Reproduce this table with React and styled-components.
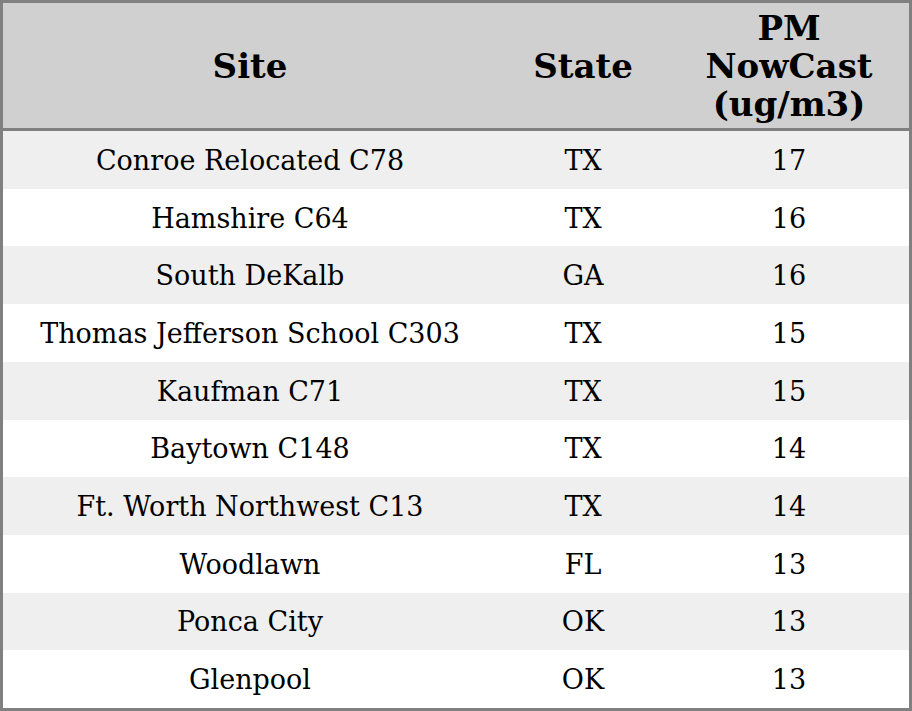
import React from "react";
import styled, { createGlobalStyle } from "styled-components";

const GlobalStyle = createGlobalStyle`
  html, body {
    margin: 0;
    padding: 0;
    background: #ffffff;
  }
  body {
    font-family: "DejaVu Serif", serif;
    color: #000000;
  }
`;

const rows = [
  { site: "Conroe Relocated C78", state: "TX", pm: 17 },
  { site: "Hamshire C64", state: "TX", pm: 16 },
  { site: "South DeKalb", state: "GA", pm: 16 },
  { site: "Thomas Jefferson School C303", state: "TX", pm: 15 },
  { site: "Kaufman C71", state: "TX", pm: 15 },
  { site: "Baytown C148", state: "TX", pm: 14 },
  { site: "Ft. Worth Northwest C13", state: "TX", pm: 14 },
  { site: "Woodlawn", state: "FL", pm: 13 },
  { site: "Ponca City", state: "OK", pm: 13 },
  { site: "Glenpool", state: "OK", pm: 13 },
];

const Table = styled.div`
  box-sizing: border-box;
  width: 912px;
  height: 711px;
  border: 3px solid #808080;
  display: grid;
  grid-template-columns: 494px 172px 1fr;
  grid-template-rows: 128px repeat(10, 1fr);
`;

const HeadCell = styled.div`
  background: #d0d0d0;
  border-bottom: 3px solid #808080;
  display: flex;
  align-items: center;
  justify-content: center;
  text-align: center;
  font-weight: bold;
  font-size: 34px;
  line-height: 38px;
`;

const Cell = styled.div`
  background: ${(p) => (p.$odd ? "#efefef" : "#ffffff")};
  display: flex;
  align-items: center;
  justify-content: center;
  font-size: 27px;
  padding-top: 1px;
`;

export default function App() {
  return (
    <>
      <GlobalStyle />
      <Table>
        <HeadCell>Site</HeadCell>
        <HeadCell>State</HeadCell>
        <HeadCell>
          PM
          <br />
          NowCast
          <br />
          (ug/m3)
        </HeadCell>
        {rows.map((r, i) => (
          <React.Fragment key={r.site}>
            <Cell $odd={i % 2 === 0}>{r.site}</Cell>
            <Cell $odd={i % 2 === 0}>{r.state}</Cell>
            <Cell $odd={i % 2 === 0}>{r.pm}</Cell>
          </React.Fragment>
        ))}
      </Table>
    </>
  );
}
